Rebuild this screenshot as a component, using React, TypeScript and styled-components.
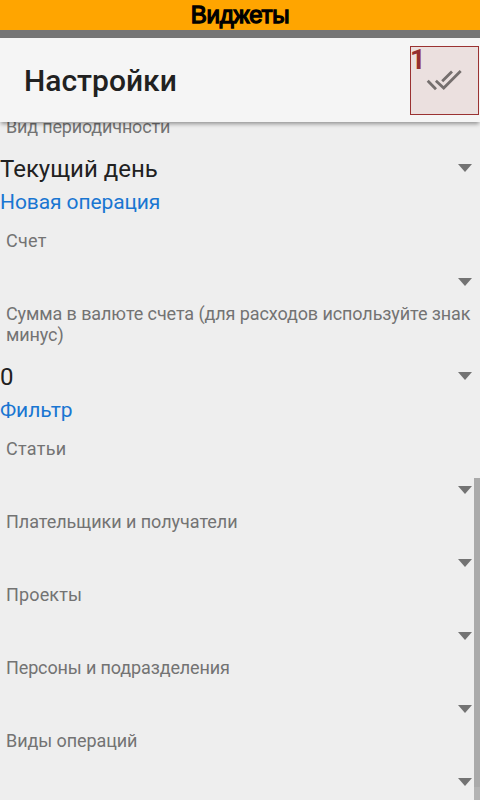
import React from "react";
import styled, { createGlobalStyle } from "styled-components";

const GlobalStyle = createGlobalStyle`
  body { margin: 0; background: #eeeeee; overflow: hidden; }
  *, *::before, *::after { box-sizing: border-box; }
`;

const Screen = styled.div`
  position: relative;
  display: flex;
  flex-direction: column;
  width: 480px;
  height: 800px;
  overflow: hidden;
  background: #eeeeee;
  font-family: Roboto, sans-serif;
`;

const Banner = styled.div`
  flex: none;
  height: 30px;
  background: #ffa500;
  color: #000;
  font: 24px/30px "Liberation Sans", sans-serif;
  letter-spacing: -0.25px;
  -webkit-text-stroke: 1.3px #000;
  text-align: center;
`;

const StatusBar = styled.div`
  flex: none;
  height: 8px;
  background: #757575;
`;

const Toolbar = styled.header`
  position: relative;
  z-index: 1;
  flex: none;
  display: flex;
  align-items: flex-start;
  justify-content: space-between;
  height: 84px;
  padding: 8px 1px 0 24px;
  background: #f5f5f5;
  box-shadow: 0 3px 4px -1px rgba(0, 0, 0, 0.38);
`;

const Title = styled.h1`
  margin: 0;
  padding-top: 17px;
  color: #212121;
  font-size: 30px;
  font-weight: 500;
  line-height: 35px;
  white-space: nowrap;
`;

const ConfirmButton = styled.button`
  position: relative;
  width: 69px;
  height: 69px;
  padding: 0;
  border: 1px solid #9a3232;
  background: #ebe0df;
`;

const Marker = styled.span`
  position: absolute;
  top: 0;
  left: -1px;
  color: #962f2f;
  font: bold 27px/27px Roboto, sans-serif;
`;

const CheckIcon = styled.svg`
  display: block;
  width: 67px;
  height: 67px;
  fill: none;
  stroke: #756f6e;
  stroke-width: 2.8;
`;

const Settings = styled.main`
  flex: 1;
  min-height: 0;
  overflow: hidden;
`;

const SettingsList = styled.div`
  margin-top: -6px;
`;

const SectionTitle = styled.h2`
  height: 41px;
  margin: 0;
  padding-top: 1px;
  color: #1976d2;
  font-size: 21px;
  font-weight: 400;
  line-height: 25px;
  letter-spacing: -0.1px;
`;

const Label = styled.div<{ $tracking: number }>`
  padding-left: 6px;
  color: #737373;
  font-size: 18px;
  line-height: 21px;
  letter-spacing: ${({ $tracking }) => $tracking}px;
`;

const ValueRow = styled.div`
  display: flex;
  align-items: center;
  justify-content: space-between;
  height: 52px;
  padding: 12px 8px 0 0;
  color: #212121;
  font-size: 24px;
  line-height: 28px;
`;

const Arrow = styled.svg`
  width: 14px;
  height: 8px;
  margin-left: auto;
  margin-bottom: 2px;
  fill: #737373;
`;

const ScrollThumb = styled.div`
  position: absolute;
  top: 478px;
  right: 0;
  width: 6px;
  height: 322px;
  background: linear-gradient(#aaaaaa 309px, #b3b3b3 309px);
`;

interface FieldProps {
  label: string;
  value?: string;
  tracking?: number;
}

function Field({ label, value, tracking = 0 }: FieldProps) {
  return (
    <div>
      <Label $tracking={tracking}>{label}</Label>
      <ValueRow>
        {value && <span>{value}</span>}
        <Arrow viewBox="0 0 14 8"><path d="M0 0H14L7 8Z" /></Arrow>
      </ValueRow>
    </div>
  );
}

const filters: FieldProps[] = [
  { label: "Статьи", tracking: 0.3 },
  { label: "Плательщики и получатели", tracking: -0.04 },
  { label: "Проекты", tracking: 0.14 },
  { label: "Персоны и подразделения", tracking: -0.13 },
  { label: "Виды операций", tracking: -0.08 },
];

export default function App() {
  return (
    <>
      <GlobalStyle />
      <Screen>
        <Banner>Виджеты</Banner>
        <StatusBar />
        <Toolbar>
          <Title>Настройки</Title>
          <ConfirmButton>
            <CheckIcon viewBox="411 47 67 67">
              <path d="M427.7 80.8L436 89.2M435.9 80.8L443.7 88L460.7 71M442.2 81.2L452 71.4" />
            </CheckIcon>
            <Marker>1</Marker>
          </ConfirmButton>
        </Toolbar>
        <Settings>
          <SettingsList>
            <Field label="Вид периодичности" value="Текущий день" tracking={-0.18} />
            <SectionTitle>Новая операция</SectionTitle>
            <Field label="Счет" tracking={0.25} />
            <Field label="Сумма в валюте счета (для расходов используйте знак минус)" value="0" tracking={-0.1} />
            <SectionTitle>Фильтр</SectionTitle>
            {filters.map((field) => <Field key={field.label} {...field} />)}
          </SettingsList>
        </Settings>
        <ScrollThumb />
      </Screen>
    </>
  );
}
